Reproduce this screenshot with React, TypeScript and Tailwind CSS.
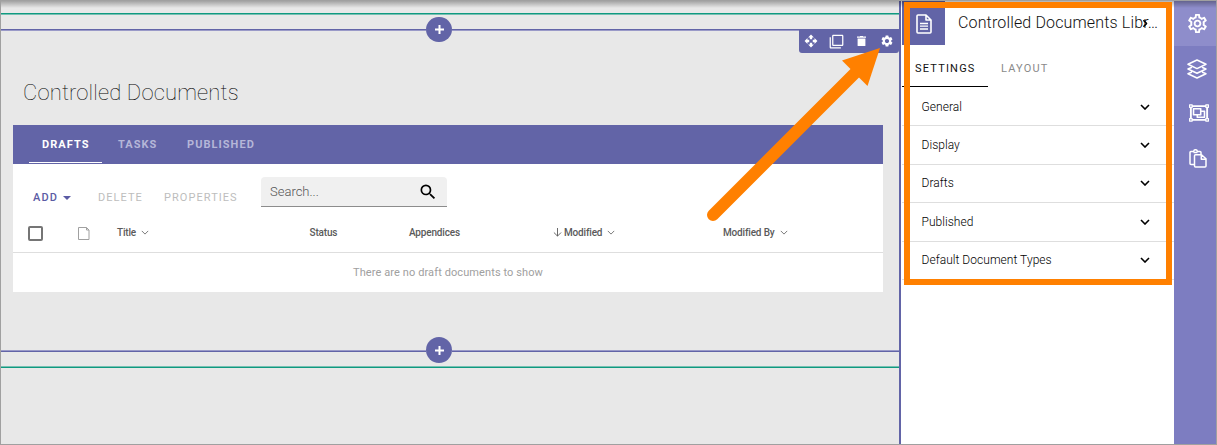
import React from "react";
import { FaRegObjectGroup } from "react-icons/fa";
import { MdFilterNone, MdOpenWith, MdOutlineSettings, MdSearch, MdSettings } from "react-icons/md";

function Chevron({ className, width = 1 }: { className: string; width?: number }) {
  return (
    <svg viewBox="0 0 10 6" className={className} fill="none" stroke="currentColor" strokeWidth={width}>
      <path d="M1 1l4 4 4-4" />
    </svg>
  );
}

function FileIcon() {
  return (
    <svg viewBox="0 0 16 20" className="h-5 w-4" fill="none" stroke="currentColor" strokeWidth="1.6" strokeLinejoin="round">
      <path d="M2 1h8l5 5v12a1 1 0 0 1-1 1H2a1 1 0 0 1-1-1V2a1 1 0 0 1 1-1zM10 1v5h5" />
      <path d="M4 9.500h8M4 12.200h8M4 15h8" strokeWidth="1.300" />
    </svg>
  );
}

function LayersIcon() {
  return (
    <svg viewBox="0 0 20 20" className="size-5" fill="none" stroke="currentColor" strokeWidth="1.500" strokeLinejoin="round" strokeLinecap="round">
      <path d="M10 1l9 4.300-9 4.300-9-4.300z" />
      <path d="M4.500 8.500L1 10l9 4.300 9-4.300-3.500-1.500M4.500 13.200L1 14.700 10 19l9-4.300-3.500-1.500" />
    </svg>
  );
}

function PasteIcon() {
  return (
    <svg viewBox="0 0 18 19" className="h-[19px] w-[18px]" fill="none" stroke="currentColor" strokeWidth="1.500" strokeLinejoin="round">
      <path d="M5.500 15.500H2a1 1 0 0 1-1-1V3.500a1 1 0 0 1 1-1h2.700a1.800 1.800 0 0 1 3.600 0H11a1 1 0 0 1 1 1V5M4.500 3.500h4" />
      <path d="M6.500 5.800h6l4.500 4V17a1 1 0 0 1-1 1H6.500a1 1 0 0 1-1-1V6.800a1 1 0 0 1 1-1zM12.300 6v4.200H17" />
    </svg>
  );
}

function TrashIcon({ className }: { className: string }) {
  return (
    <svg viewBox="0 0 9 10" className={className} fill="currentColor">
      <path d="M0 .5h3V0h3v.5h3v1.300H0zM.6 2.600h7.800V9.500a.5.5 0 0 1-.5.5H1.100a.5.5 0 0 1-.5-.5z" />
    </svg>
  );
}

function Divider({ lower = false }: { lower?: boolean }) {
  const line = lower ? "mt-[13px] h-[2px] border-b border-[#6264a7] bg-[#9a9ac8]" : "mt-[12px] h-[2px] border-t border-[#6264a7] bg-[#9a9ac8]";
  const button = lower ? "h-[26px]" : "h-[25px]";
  return (
    <div className="flex h-[26px] shrink-0 items-start">
      <div className={line + " w-[425px]"} />
      <button className={button + " flex w-[26px] items-center justify-center rounded-full bg-[#6264a7] text-white"}>
        <svg viewBox="0 0 9 9" className="size-[9px]" stroke="currentColor" strokeWidth="2"><path d="M4.500 0v9M0 4.500h9" /></svg>
      </button>
      <div className={line + " grow"} />
    </div>
  );
}

function DocumentsBlock() {
  return (
    <section className="ml-[12px] flex h-[167px] w-[870px] shrink-0 flex-col bg-white">
      <nav className="flex h-[39px] items-end bg-[#6264a7] pl-4 text-[11px] font-bold leading-[16px] tracking-[1.05px] text-[#b5b6d8]">
        <span className="mb-px h-[27px] w-[73px] border-b border-white pl-[13px] pt-px text-white">DRAFTS</span>
        <span className="mb-px h-[27px] w-[68px] pl-[16px] pt-px">TASKS</span>
        <span className="mb-px h-[27px] pl-[17px] pt-px">PUBLISHED</span>
      </nav>
      <div className="flex h-[50px] items-start pt-[13px] text-[11px] leading-[16px] text-[#bdbdbd]">
        <span className="flex w-[85px] items-center pl-[20px] pt-[13px] font-medium tracking-[1.1px] text-[#5b5ba4]">
          ADD
          <svg viewBox="0 0 8 4" className="ml-[5px] h-1 w-2" fill="currentColor"><path d="M0 0h8L4 4z" /></svg>
        </span>
        <span className="w-[66px] pt-[13px] tracking-[1.05px]">DELETE</span>
        <span className="w-[97px] pt-[13px] tracking-[1.05px]">PROPERTIES</span>
        <div className="flex h-[30px] w-[186px] items-center justify-between rounded-t border-b border-[#8c8c8c] bg-[#f0f0f0] px-[9px] text-[13px] font-[350] text-[#555]">
          Search...
          <MdSearch className="size-5 text-black" />
        </div>
      </div>
      <div className="flex h-[39px] shrink-0 items-center border-b border-[#dedede] pl-[15px] text-[10px] font-medium tracking-[-0.17px] text-[#5a5a5a]">
        <span className="flex w-[50px]"><span className="size-[15px] rounded-[2px] border-2 border-[#757575]" /></span>
        <span className="flex w-[39px]">
          <svg viewBox="0 0 12 13" className="h-[13px] w-3" fill="none" stroke="#a0a0a0">
            <path d="M.5.5h8l2.500 2.500v9.500H.5zM8.500.5v2.500h2.500" />
          </svg>
        </span>
        <span className="flex w-[192px] items-center gap-[5px] pb-px">Title <Chevron className="h-[5px] w-2" /></span>
        <span className="w-[100px] pb-px pl-[0.5px]">Status</span>
        <span className="w-[144px] pb-px">Appendices</span>
        <span className="flex w-[170px] items-center pb-px">
          <svg viewBox="0 0 10 10" className="mr-[2px] size-[9px]" fill="none" stroke="currentColor"><path d="M5 0v9M1 5l4 4 4-4" /></svg>
          Modified <Chevron className="ml-[5px] h-[5px] w-2" />
        </span>
        <span className="flex items-center gap-[5px] pb-px">Modified By <Chevron className="h-[5px] w-2" /></span>
      </div>
      <p className="pt-3 text-center text-[11px] leading-[16px] tracking-[0.1px] text-[#a0a0a0]">There are no draft documents to show</p>
    </section>
  );
}

function Canvas() {
  return (
    <main className="flex w-[898px] shrink-0 flex-col bg-[#e8e8e8]">
      <div className="mt-[12px] h-[2px] shrink-0 border-t border-[#0f9a80] bg-[#77bfb2]" />
      <div className="mt-[2px]"><Divider /></div>
      <div className="-mt-[14px] flex h-[24px] shrink-0 justify-end">
        <div className="flex w-[100px] items-center rounded-b-[3px] bg-[#6264a7] pl-[5px] text-white">
          <MdOpenWith className="size-[14px]" />
          <MdFilterNone className="ml-[11px] size-[15px]" />
          <TrashIcon className="ml-[13px] h-[10px] w-[9px]" />
          <MdSettings className="ml-[14px] size-[14px]" />
        </div>
      </div>
      <h1 className="mt-[24px] h-[48px] shrink-0 pl-[22px] text-[22px] font-thin leading-[32px] tracking-[0.16px] text-black">Controlled Documents</h1>
      <DocumentsBlock />
      <div className="mt-[45px]"><Divider lower /></div>
      <div className="mt-[3px] h-[2px] shrink-0 border-b border-[#0f9a80] bg-[#77bfb2]" />
    </main>
  );
}

const sections = ["General", "Display", "Drafts", "Published", "Default Document Types"];

function SettingsPanel() {
  return (
    <aside className="flex w-[275px] shrink-0 flex-col border-l-2 border-[#6264a7] bg-white pl-px">
      <header className="flex h-[44px] shrink-0">
        <div className="flex w-[43px] items-center justify-end bg-[#6264a7] pr-[13px] pt-[2px] text-white">
          <FileIcon />
        </div>
        <h2 className="relative ml-[13px] whitespace-nowrap pt-[12px] text-[16px] font-[350] leading-[20px] tracking-[0.15px] text-[#111]">
          Controlled Documents Libr…
          <Chevron width={2} className="absolute left-[183px] top-[20px] h-[5px] w-2 -rotate-90 text-black" />
        </h2>
      </header>
      <nav className="flex h-[42px] shrink-0 text-[11px] leading-[16px] tracking-[1.2px] text-[#8a8a8a]">
        <span className="w-[86px] border-b border-black pl-[13px] pt-[16px] text-[#111]">SETTINGS</span>
        <span className="pl-[13px] pt-[16px]">LAYOUT</span>
      </nav>
      <div className="shrink-0 pt-px">
        {sections.map((name) => (
          <div key={name} className="flex h-[38.4px] items-center justify-between border-b border-[#dedede] pl-[19.500px] pr-[24px] text-[12px] font-[350] tracking-[0.04px] text-black">
            {name}
            <Chevron width={1.6} className="h-[6px] w-[10px] text-black" />
          </div>
        ))}
      </div>
    </aside>
  );
}

function Rail() {
  return (
    <nav className="flex w-[42px] shrink-0 flex-col bg-[#7d7dc1] text-white">
      <div className="flex h-[45px] items-center justify-center bg-[#8e8dcb] pl-[4px]"><MdOutlineSettings className="size-[23px]" /></div>
      <div className="flex h-[45px] items-center justify-center pl-[4px]"><LayersIcon /></div>
      <div className="flex h-[45px] items-center justify-center pb-[2px] pl-[8px]"><FaRegObjectGroup className="size-[20px]" /></div>
      <div className="flex h-[45px] items-center justify-center pl-[6px]"><PasteIcon /></div>
    </nav>
  );
}

export default function App() {
  return (
    <div className="relative flex h-[445px] w-[1217px] overflow-hidden border border-[#a0a0a0] font-[Roboto,sans-serif]">
      <Canvas />
      <SettingsPanel />
      <Rail />
      <div className="absolute inset-x-0 top-0 h-[7px] bg-linear-to-b from-black/30 to-transparent" />
      <div className="absolute left-[903px] top-[1px] h-[283px] w-[268px] border-6 border-[#ff8000]" />
      <svg className="absolute left-[699px] top-[39px]" width="190" height="190" viewBox="700 40 190 190">
        <path d="M713 215L855 73" stroke="#ff8000" strokeWidth="12" strokeLinecap="round" />
        <path d="M880 48L842 60.500L867.500 86z" fill="#ff8000" />
      </svg>
    </div>
  );
}
